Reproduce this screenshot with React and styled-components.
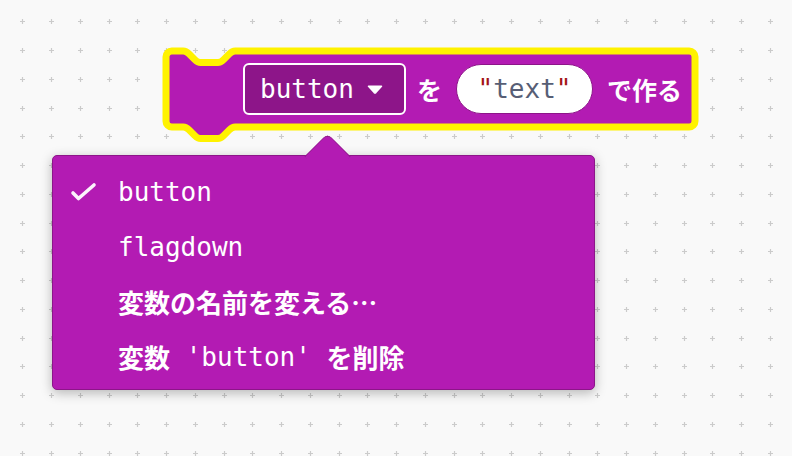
import React from 'react'
import styled, { createGlobalStyle } from 'styled-components'

const gridSvg = encodeURIComponent(
  `<svg xmlns="http://www.w3.org/2000/svg" width="28.75" height="28.75"><path d="M14.375 11.9v4.95M11.9 14.375h4.95" stroke="#cbcbcb" stroke-width="1.2"/></svg>`
)

const GlobalStyle = createGlobalStyle`
  html, body {
    margin: 0;
    padding: 0;
    width: 100%;
    height: 100%;
    overflow: hidden;
  }
  body {
    background-color: #f9f9f9;
    background-image: url("data:image/svg+xml,${gridSvg}");
    background-size: 28.75px 28.75px;
    background-position: 8.6px 7.6px;
    font-family: "DejaVu Sans Mono", "Noto Sans CJK JP", monospace;
  }
`

const PURPLE = '#b31bb3'
const DARK = '#8d1589'

const Workspace = styled.div`
  position: relative;
  width: 792px;
  height: 456px;
`

// block is placed on the free canvas, like blockly does
const Block = styled.div`
  position: absolute;
  left: 166px;
  top: 51px;
  width: 529px;
  height: 76px;
  display: flex;
  align-items: center;
  padding-left: 77px;
  box-sizing: border-box;
  color: #fff;
`

const BlockShape = styled.svg`
  position: absolute;
  left: 0;
  top: 0;
  overflow: visible;
  z-index: 0;
`

const Dropdown = styled.div`
  position: relative;
  z-index: 1;
  width: 163px;
  height: 52px;
  box-sizing: border-box;
  border: 2px solid #fff;
  border-radius: 6px;
  background: ${DARK};
  display: flex;
  align-items: center;
  padding-left: 15px;
  font-size: 26px;
`

const Caret = styled.svg`
  margin-left: 13px;
`

const Label = styled.span`
  position: relative;
  z-index: 1;
  font-family: "Noto Sans CJK JP", sans-serif;
  font-weight: 700;
  font-size: 25px;
  margin-left: ${p => p.$gap}px;
`

const TextPill = styled.div`
  position: relative;
  z-index: 1;
  margin-left: 14px;
  width: 137px;
  height: 50px;
  box-sizing: border-box;
  border-radius: 25px;
  background: #fff;
  border: 1px solid ${DARK};
  display: flex;
  align-items: center;
  justify-content: center;
  font-size: 26px;
  color: #575e75;
`

const Quote = styled.span`
  color: #a31515;
`

const Menu = styled.div`
  position: absolute;
  left: 52px;
  top: 155px;
  width: 543px;
  height: 235px;
  box-sizing: border-box;
  background: ${PURPLE};
  border: 1px solid ${DARK};
  border-radius: 5px;
  box-shadow: 0 3px 12px rgba(0, 0, 0, 0.28);
  padding: 8px 0 6px;
  color: #fff;
`

const MenuArrow = styled.div`
  position: absolute;
  left: 258px;
  top: -16px;
  width: 32px;
  height: 32px;
  background: ${PURPLE};
  border-top: 1px solid ${DARK};
  border-left: 1px solid ${DARK};
  border-top-left-radius: 6px;
  transform: rotate(45deg);
`

const Item = styled.div`
  position: relative;
  height: 55px;
  display: flex;
  align-items: center;
  padding-left: 65px;
  font-size: 26px;
  white-space: pre;
`

const Check = styled.svg`
  position: absolute;
  left: 17px;
  top: 18px;
`

const Jp = styled.span`
  font-family: "Noto Sans CJK JP", sans-serif;
  font-weight: 700;
  font-size: 26px;
  font-variant-east-asian: full-width;
`

function blockPath(w, h) {
  const s = 1.44
  const n = (x) => (x * s).toFixed(2)
  const r = n(4)
  const off = n(12)
  const notchTop = `c ${n(2)},0 ${n(3)},${n(1)} ${n(4)},${n(2)} l ${n(4)},${n(4)} c ${n(1)},${n(1)} ${n(2)},${n(2)} ${n(4)},${n(2)} h ${n(12)} c ${n(2)},0 ${n(3)},${n(-1)} ${n(4)},${n(-2)} l ${n(4)},${n(-4)} c ${n(1)},${n(-1)} ${n(2)},${n(-2)} ${n(4)},${n(-2)}`
  const notchBottom = `c ${n(-2)},0 ${n(-3)},${n(1)} ${n(-4)},${n(2)} l ${n(-4)},${n(4)} c ${n(-1)},${n(1)} ${n(-2)},${n(2)} ${n(-4)},${n(2)} h ${n(-12)} c ${n(-2)},0 ${n(-3)},${n(-1)} ${n(-4)},${n(-2)} l ${n(-4)},${n(-4)} c ${n(-1)},${n(-1)} ${n(-2)},${n(-2)} ${n(-4)},${n(-2)}`
  return `M 0,${r} a ${r} ${r} 0 0 1 ${r},-${r} H ${off} ${notchTop} H ${w - r} a ${r} ${r} 0 0 1 ${r},${r} V ${h - r} a ${r} ${r} 0 0 1 -${r},${r} H ${n(48)} ${notchBottom} H ${r} a ${r} ${r} 0 0 1 -${r},-${r} Z`
}

const menuItems = [
  { key: 'button', checked: true, content: 'button' },
  { key: 'flagdown', content: 'flagdown' },
  { key: 'rename', content: <Jp>変数の名前を変える…</Jp> },
  {
    key: 'delete',
    content: (
      <>
        <Jp>変数</Jp>{" 'button' "}<Jp>を削除</Jp>
      </>
    ),
  },
]

export default function App() {
  const w = 529
  const h = 76
  return (
    <>
      <GlobalStyle />
      <Workspace>
        <Block>
          <BlockShape width={w} height={h}>
            <path d={blockPath(w, h)} fill={PURPLE} stroke="#fff200" strokeWidth="7" />
          </BlockShape>
          <Dropdown>
            button
            <Caret width="16" height="9" viewBox="0 0 16 9">
              <path d="M1.5 1.2 H14.5 L8.8 7.6 Q8 8.4 7.2 7.6 Z" fill="#fff" stroke="#fff" strokeWidth="1.5" strokeLinejoin="round" />
            </Caret>
          </Dropdown>
          <Label $gap={11}>を</Label>
          <TextPill>
            <Quote>"</Quote>text<Quote>"</Quote>
          </TextPill>
          <Label $gap={14}>で作る</Label>
        </Block>

        <Menu>
          <MenuArrow />
          {menuItems.map((it) => (
            <Item key={it.key}>
              {it.checked && (
                <Check width="28" height="20" viewBox="0 0 28 20">
                  <polyline points="3,11 8.5,16.5 24,3" fill="none" stroke="#fff" strokeWidth="3.6" strokeLinecap="round" strokeLinejoin="round" opacity="0.95" />
                </Check>
              )}
              {it.content}
            </Item>
          ))}
        </Menu>
      </Workspace>
    </>
  )
}
